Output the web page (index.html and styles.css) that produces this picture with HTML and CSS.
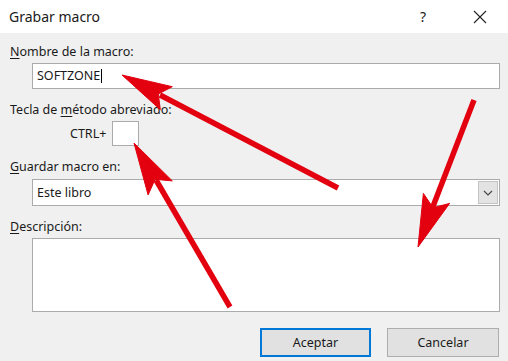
FILE: index.html
```html
<!DOCTYPE html>
<html lang="es">
<head>
  <meta charset="UTF-8">
  <meta name="viewport" content="width=device-width, initial-scale=1.0">
  <title>Grabar macro</title>
  <link rel="stylesheet" href="styles.css">
</head>
<body>
  <div class="dialog">
    <div class="titlebar">
      <span class="title">Grabar macro</span>
      <span class="help">?</span>
      <svg class="close" width="14" height="14" viewBox="0 0 14 14">
        <path d="M1 1 L13 13 M13 1 L1 13" stroke="#222" stroke-width="1.1" fill="none"/>
      </svg>
    </div>

    <div class="content">
      <div class="lbl lbl-name"><u>N</u>ombre de la macro:</div>
      <div class="field name-field">SOFTZONE<span class="caret"></span></div>

      <div class="lbl lbl-key">Tecla de <u>m</u>étodo abreviado:</div>
      <div class="key-row">
        <span>CTRL+</span>
        <div class="keybox"></div>
      </div>

      <div class="lbl lbl-store"><u>G</u>uardar macro en:</div>
      <div class="select">
        <span class="select-text">Este libro</span>
        <div class="drop">
          <svg width="10" height="6" viewBox="0 0 10 6">
            <path d="M1 1 L5 5 L9 1" stroke="#444" stroke-width="1.1" fill="none"/>
          </svg>
        </div>
      </div>

      <div class="lbl lbl-desc"><u>D</u>escripción:</div>
      <div class="field desc-field"></div>

      <div class="buttons">
        <button class="btn btn-primary">Aceptar</button>
        <button class="btn">Cancelar</button>
      </div>
    </div>

    <!-- flechas rojas por encima del cuadro -->
    <svg class="arrows" width="508" height="361" viewBox="0 0 508 361">
      <g fill="#e3000f" stroke="#e3000f">
        <line x1="338" y1="188" x2="160" y2="95" stroke-width="5.5"/>
        <polygon points="122,75 172.3,86.7 158.3,94 160.3,109.7" stroke-width="1"/>

        <line x1="230" y1="307" x2="156" y2="180" stroke-width="5.5"/>
        <polygon points="134,143 172.3,180.9 155.1,179.3 148.1,194.9" stroke-width="1"/>

        <line x1="474" y1="100" x2="432" y2="209" stroke-width="5.5"/>
        <polygon points="418,247 449.6,203.4 433,207.7 423.4,193.4" stroke-width="1"/>
      </g>
    </svg>
  </div>
</body>
</html>
```

FILE: styles.css
```css
body {
  margin: 0;
  font-family: "Noto Sans", "Open Sans", sans-serif;
  color: #1a1a1a;
}
.dialog {
  position: relative;
  width: 508px;
  height: 361px;
  background-color: #f0f0f0;
  overflow: hidden;
}
.titlebar {
  height: 33px;
  background-color: #fff;
  display: flex;
  align-items: center;
  padding-left: 9px;
  padding-right: 21px;
}
.title {
  font-size: 14px;
  flex: 1;
}
.help {
  font-size: 14px;
  margin-right: 47px;
  margin-top: -1px;
}
.close {
  margin-top: 1px;
}
.content {
  padding: 0 8px 0 10px;
  font-size: 12.5px;
  line-height: 16px;
}
.lbl u {
  text-decoration-thickness: 1px;
  text-underline-offset: 2px;
}
.lbl-name {
  margin-top: 11px;
}
.field {
  margin-left: 22px;
  background-color: #fff;
  border: 1px solid #ababab;
}
.name-field {
  margin-top: 3px;
  height: 24px;
  display: flex;
  align-items: center;
  padding-left: 4px;
}
.caret {
  display: inline-block;
  width: 1px;
  height: 14px;
  background-color: #000;
  margin-left: 1px;
}
.lbl-key {
  margin-top: 13px;
}
.key-row {
  margin-top: 3px;
  height: 25px;
  display: flex;
  align-items: center;
  padding-left: 60px;
  gap: 6px;
}
.keybox {
  width: 25px;
  height: 23px;
  background-color: #fff;
  border: 1px solid #ababab;
}
.lbl-store {
  margin-top: 13px;
}
.select {
  margin-top: 4px;
  margin-left: 22px;
  height: 25px;
  border: 1px solid #ababab;
  background-color: #fff;
  display: flex;
  align-items: center;
}
.select-text {
  flex: 1;
  padding-left: 4px;
}
.drop {
  width: 20px;
  height: 23px;
  margin-right: 1px;
  background-color: #e3e3e3;
  border: 1px solid #c4c4c4;
  box-sizing: border-box;
  display: flex;
  align-items: center;
  justify-content: center;
}
.lbl-desc {
  margin-top: 13px;
}
.desc-field {
  margin-top: 3px;
  height: 72px;
}
.buttons {
  margin-top: 16px;
  display: flex;
  justify-content: flex-end;
  gap: 16px;
  padding-right: 1px;
}
.btn {
  width: 112px;
  height: 29px;
  font-family: inherit;
  font-size: 12.5px;
  color: #1a1a1a;
  background-color: #e1e1e1;
  border: 1px solid #adadad;
  padding: 0;
}
.btn-primary {
  width: 111px;
  border: 2px solid #0078d7;
}
.arrows {
  position: absolute;
  top: 0;
  left: 0;
}
```
